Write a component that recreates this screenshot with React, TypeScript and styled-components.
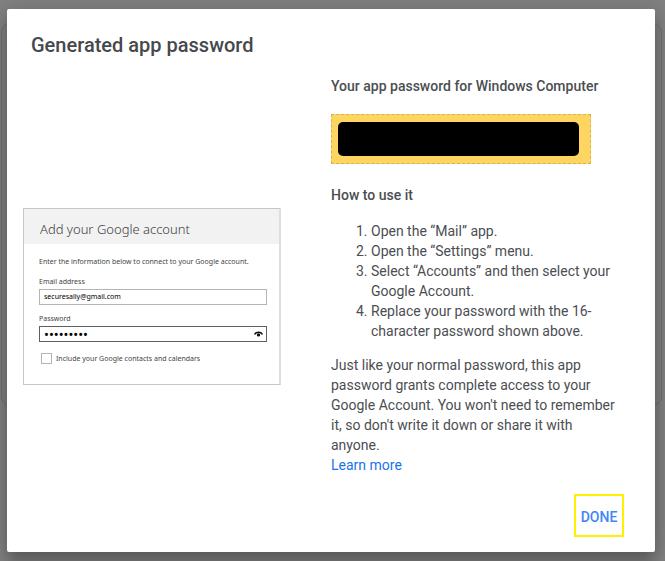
import React from "react";
import styled, { createGlobalStyle } from "styled-components";

const GlobalStyle = createGlobalStyle`
  *, *::before, *::after { box-sizing: border-box; }
  body {
    margin: 0;
    background: #808080;
    color: #4b4e52;
    font: 400 14px/20px Roboto, sans-serif;
  }
`;

const Page = styled.div`
  position: relative;
  min-height: 100vh;
  padding: 9px 10px 9px 7px;
`;

const PageCard = styled.div`
  position: absolute;
  inset: 24px 3px 156px 1px;
  border: 1px solid #6e6e6e;
  border-radius: 8px;
`;

const Dialog = styled.main`
  position: relative;
  padding: 24px 24px 15px;
  border-radius: 2px;
  background: #fff;
  box-shadow: 0 12px 15px rgba(0, 0, 0, 0.24), 0 0 20px rgba(0, 0, 0, 0.14);
`;

const Title = styled.h1`
  margin: 0;
  color: #45484c;
  font-size: 20px;
  font-weight: 500;
  line-height: 24px;
`;

const Columns = styled.div`
  display: grid;
  grid-template-columns: 1fr 1fr;
  align-items: center;
  margin-top: 19px;
`;

const Preview = styled.section`
  width: 258px;
  margin: 42px 0 0 -8px;
  padding-bottom: 20px;
  border: 1px solid #c6c6c6;
  border-right: 2px solid #dedede;
  background: #fff;
  color: #444;
  font: 400 7px/10px "Noto Sans", sans-serif;
`;

const PreviewTitle = styled.h2`
  margin: 0;
  padding: 11px 16px 5px;
  background: #f2f2f2;
  color: #404040;
  font: 300 13px/19px "Noto Sans", sans-serif;
`;

const PreviewForm = styled.form`
  display: flex;
  flex-direction: column;
  padding: 13px 12px 0 15px;
`;

const Intro = styled.p`
  margin: 0 0 10px;
  white-space: nowrap;
`;

const Field = styled.label`
  display: block;
  margin-bottom: 9px;
`;

const FieldBox = styled.span<{ $strong?: boolean }>`
  display: flex;
  align-items: center;
  height: 16px;
  margin-top: 2px;
  padding: 0 3px 0 4px;
  border: 1px solid ${(p) => (p.$strong ? "#606060" : "#b4b4b4")};
`;

const FieldInput = styled.input`
  flex: 1;
  min-width: 0;
  padding: 0;
  border: 0;
  outline: 0;
  background: transparent;
  color: #000;
  font: 400 7px/12px "Noto Sans", sans-serif;

  &[type="password"] {
    font-size: 13px;
  }
`;

const CheckLabel = styled.label`
  display: flex;
  align-items: center;
  gap: 4px;
  margin: 2px 0 0 2px;
`;

const CheckBox = styled.input`
  appearance: none;
  width: 11px;
  height: 11px;
  margin: 0;
  border: 1px solid #b4b4b4;
  background: #fff;
`;

const Instructions = styled.section`
  min-width: 0;
  padding-right: 8px;
`;

const Heading = styled.h3`
  margin: 0;
  font-size: 14px;
  font-weight: 500;
  line-height: 20px;
`;

const PasswordBox = styled.div`
  max-width: 260px;
  margin: 18px 0 21px;
  padding: 7px 11px 7px 6px;
  border: 1px dashed #d5b44f;
  background: #ffd561;
`;

const Redaction = styled.div`
  height: 34px;
  border-radius: 5px;
  background: #000;
`;

const Steps = styled.ol`
  margin: 16px 0 14px;
  padding-left: 40px;
`;

const Paragraph = styled.p`
  margin: 0;
`;

const Link = styled.a`
  color: #1a73e8;
  text-decoration: none;
`;

const Footer = styled.footer`
  display: flex;
  justify-content: flex-end;
  margin: 19px 7px 0 0;
`;

const DoneButton = styled.button`
  width: 50px;
  height: 43px;
  padding: 2px 0 0;
  border: 2px solid #fff000;
  background: transparent;
  color: #4285f4;
  font: 500 14px/20px Roboto, sans-serif;
  cursor: pointer;
`;

const EyeIcon = () => (
  <svg width="9" height="6" viewBox="0 0 9 6" aria-hidden="true">
    <path d="M.6 3.5C2 .6 7 .6 8.4 3.5" fill="none" stroke="#111" strokeWidth="1.5" />
    <circle cx="4.5" cy="3.9" r="1.7" fill="#111" />
  </svg>
);

export default function App() {
  return (
    <Page>
      <GlobalStyle />
      <PageCard />
      <Dialog role="dialog" aria-labelledby="dialog-title">
        <Title id="dialog-title">Generated app password</Title>
        <Columns>
          <Preview>
            <PreviewTitle>Add your Google account</PreviewTitle>
            <PreviewForm>
              <Intro>Enter the information below to connect to your Google account.</Intro>
              <Field>
                Email address
                <FieldBox>
                  <FieldInput type="email" defaultValue="securesally@gmail.com" />
                </FieldBox>
              </Field>
              <Field>
                Password
                <FieldBox $strong>
                  <FieldInput type="password" defaultValue="sallysafe" />
                  <EyeIcon />
                </FieldBox>
              </Field>
              <CheckLabel>
                <CheckBox type="checkbox" />
                Include your Google contacts and calendars
              </CheckLabel>
            </PreviewForm>
          </Preview>
          <Instructions>
            <Heading>Your app password for Windows Computer</Heading>
            <PasswordBox>
              <Redaction />
            </PasswordBox>
            <Heading>How to use it</Heading>
            <Steps>
              <li>Open the “Mail” app.</li>
              <li>Open the “Settings” menu.</li>
              <li>Select “Accounts” and then select your Google Account.</li>
              <li>Replace your password with the 16-character password shown above.</li>
            </Steps>
            <Paragraph>
              Just like your normal password, this app password grants complete access to your
              Google Account. You won't need to remember it, so don't write it down or share it
              with anyone.
            </Paragraph>
            <Link href="#learn-more">Learn more</Link>
          </Instructions>
        </Columns>
        <Footer>
          <DoneButton type="button">DONE</DoneButton>
        </Footer>
      </Dialog>
    </Page>
  );
}
